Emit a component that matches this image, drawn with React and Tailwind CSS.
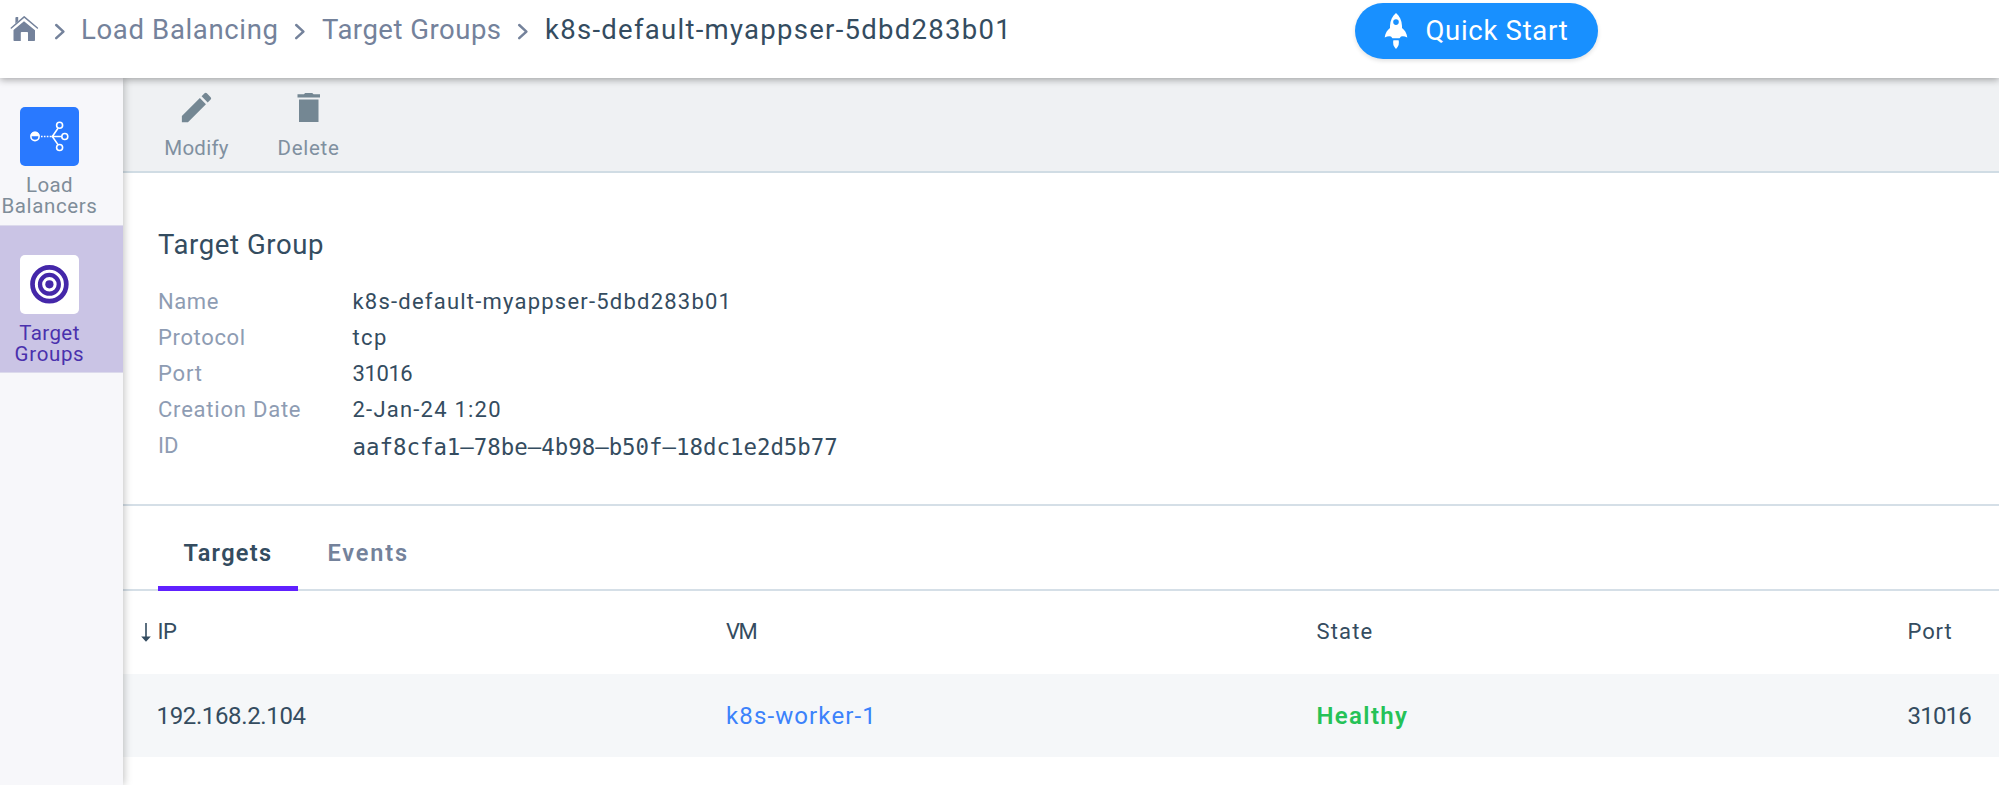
function HomeIcon() {
  return (
    <svg className="h-[28px] w-[29px] shrink-0" viewBox="0 0 29 28" fill="#74829b">
      <path d="M14 7.2 25 16.2V26.2Q25 27 24.2 27H18V18.8Q18 18 17.200 18H11.6Q10.8 18 10.8 18.8V27H4.3Q3.5 27 3.5 26.2V16Z" />
      <path d="M5.4 4Q5.4 3 6.4 3H8.2V7.2L5.4 9.600Z" />
      <path d="M1.3 14 14.2 2.9 27.4 14" fill="none" stroke="#74829b" strokeWidth="1.5" strokeLinecap="round" strokeLinejoin="round" />
    </svg>
  );
}

function Chevron() {
  return (
    <svg className="h-[18px] w-[12px] shrink-0" viewBox="0 0 12 18" fill="none" stroke="#74829b" strokeWidth="2.5" strokeLinecap="round" strokeLinejoin="round">
      <path d="M2.200 3 9.400 9.600 2.200 16.200" />
    </svg>
  );
}

function RocketIcon() {
  return (
    <svg className="h-[36px] w-[24px] shrink-0" viewBox="0 0 24 36" fill="white">
      <path
        fillRule="evenodd"
        d="M12 0C15.6 2.8 17.8 7.4 18 13L18 15C20.6 17.2 22.8 20 23.3 24.4Q19.5 22.8 17 23.6L15.6 25.2H8.4L7 23.6Q4.500 22.800 .7 24.400C1.200 20 3.400 17.200 6 15L6 13C6.200 7.400 8.400 2.800 12 0ZM12 6.300A2.800 2.800 0 1 0 12 11.900A2.800 2.800 0 1 0 12 6.300Z"
      />
      <path d="M9.400 27.200H14.600Q16 31.500 12 36Q8 31.500 9.400 27.200Z" />
    </svg>
  );
}

function PencilIcon() {
  return (
    <svg className="size-[39px]" viewBox="0 0 24 24" fill="#748793">
      <path d="M3 17.250V21h3.750L17.810 9.940l-3.750-3.750L3 17.250zM20.710 7.040a1 1 0 0 0 0-1.410l-2.340-2.340a1 1 0 0 0-1.410 0l-1.830 1.830 3.750 3.750 1.830-1.830z" />
    </svg>
  );
}

function TrashIcon() {
  return (
    <svg className="size-[39px]" viewBox="0 0 39 39" fill="#748793">
      <path d="M8.500 6.300H14.800L16.200 5H23.200L24.600 6.300H31V9.400H8.500ZM10 11.400H29.500V34H10Z" />
    </svg>
  );
}

function BalancerIcon() {
  return (
    <svg className="size-[59px] rounded-[5px] bg-[#2979ff]" viewBox="0 0 59 59" fill="none" stroke="white" strokeWidth="1.6">
      <circle cx="15" cy="29.500" r="4.100" />
      <path d="M10.500 29.300A4.500 4.500 0 0 1 19.500 29.300Z" fill="white" stroke="none" />
      <path d="M21 29.500H31" strokeDasharray="1.600 1.300" strokeWidth="1.400" />
      <path d="M38 21.200 32.300 29.500 38 37.600M32.300 29.500H41.500" />
      <circle cx="32.300" cy="29.500" r="1" fill="white" stroke="none" />
      <circle cx="39.600" cy="18.300" r="3" />
      <circle cx="44.800" cy="29.500" r="3" />
      <circle cx="39.600" cy="40.500" r="3" />
    </svg>
  );
}

function TargetIcon() {
  return (
    <svg className="size-[59px] rounded-[5px] bg-white" viewBox="0 0 59 59" fill="none" stroke="#4427a9" strokeWidth="4.700">
      <circle cx="29.400" cy="29.300" r="16.900" />
      <circle cx="29.400" cy="29.300" r="9.400" strokeWidth="4.300" />
      <circle cx="29.400" cy="29.300" r="4.100" fill="#4427a9" stroke="none" />
    </svg>
  );
}

function SortArrow() {
  return (
    <svg className="h-[20px] w-[10px] shrink-0" viewBox="0 0 10 20" fill="#344c60">
      <path d="M4.200 1H5.800V14.600H9.800L5 19.700 .2 14.600H4.200Z" />
    </svg>
  );
}

const labelCls = "text-[#8e9cb3]";

export default function App() {
  return (
    <div className="flex h-[785px] w-full flex-col overflow-hidden whitespace-nowrap bg-white font-[Roboto,sans-serif] text-[#344c60]">
      <header className="relative z-20 flex h-[78px] shrink-0 items-start bg-white shadow-[0_2px_7px_rgba(0,0,0,0.32)]">
        <nav className="flex h-[60px] items-center pl-[10px] text-[27.5px] leading-none text-[#74829b]">
          <div className="w-[44px] pb-[5px]"><HomeIcon /></div>
          <div className="w-[27px] pt-[1px]"><Chevron /></div>
          <span className="w-[213px] tracking-[0.66px]">Load Balancing</span>
          <div className="w-[28px] pt-[1px]"><Chevron /></div>
          <span className="w-[195px] tracking-[0.5px]">Target Groups</span>
          <div className="w-[28px] pt-[1px]"><Chevron /></div>
          <span className="tracking-[1.28px] text-[#344c60]">k8s-default-myappser-5dbd283b01</span>
        </nav>
        <button className="ml-auto mr-[401px] mt-[3px] flex h-[56px] w-[243px] items-center rounded-full bg-[#1890ff] pl-[28.500px] text-[27.5px] leading-none text-white shadow-[0_2px_4px_rgba(0,0,0,0.12)]">
          <RocketIcon />
          <span className="ml-[18px] tracking-[0.7px]">Quick Start</span>
        </button>
      </header>

      <div className="flex min-h-0 flex-1">
        <aside className="relative z-10 w-[123px] shrink-0 bg-[#f7f7fa] text-center text-[20.5px] leading-[21px] shadow-[1px_0_8px_rgba(0,0,0,0.25)]">
          <a className="block h-[147px] pt-[29px] text-[#7f8d99]">
            <div className="flex w-[99px] flex-col items-center gap-[8.500px]">
              <BalancerIcon />
              <div>
                <div className="tracking-[0.37px]">Load</div>
                <div className="tracking-[0.63px]">Balancers</div>
              </div>
            </div>
          </a>
          <a className="block h-[148px] border-y border-[#dcdaec] bg-[#cac4e5] pt-[29px] text-[#4a31ad]">
            <div className="flex w-[99px] flex-col items-center gap-[8.500px]">
              <TargetIcon />
              <div>
                <div className="tracking-[0.42px]">Target</div>
                <div className="tracking-[0.66px]">Groups</div>
              </div>
            </div>
          </a>
        </aside>

        <main className="min-w-0 flex-1">
          <div className="flex h-[95px] border-b-2 border-[#d0dce4] bg-[#eff1f3] pl-[17.500px] pt-[10px] text-[20.5px] leading-none text-[#8090a0]">
            <button className="flex w-[112px] flex-col items-center gap-[11px]">
              <PencilIcon />
              <span className="tracking-[0.25px]">Modify</span>
            </button>
            <button className="flex w-[112px] flex-col items-center gap-[11px]">
              <TrashIcon />
              <span className="tracking-[0.72px]">Delete</span>
            </button>
          </div>

          <section className="h-[333px] border-b-2 border-[#d5dfe7] pl-[35px] pt-[54px]">
            <h2 className="text-[27.5px] leading-[36px] tracking-[0.6px]">Target Group</h2>
            <dl className="mt-[20.500px] grid auto-rows-[36.150px] grid-cols-[194.500px_auto] items-start text-[22px] leading-[36px]">
              <dt className={labelCls + " tracking-[0.6px]"}>Name</dt>
              <dd className="tracking-[1.22px]">k8s-default-myappser-5dbd283b01</dd>
              <dt className={labelCls + " tracking-[0.65px]"}>Protocol</dt>
              <dd className="tracking-[1.39px]">tcp</dd>
              <dt className={labelCls + " tracking-[0.8px]"}>Port</dt>
              <dd className="tracking-[-0.4px]">31016</dd>
              <dt className={labelCls + " tracking-[0.78px]"}>Creation Date</dt>
              <dd className="tracking-[1.22px]">2-Jan-24 1:20</dd>
              <dt className={labelCls}>ID</dt>
              <dd className="font-['DejaVu_Sans_Mono',monospace] text-[22.400px] leading-[39px]">aaf8cfa1–78be–4b98–b50f–18dc1e2d5b77</dd>
            </dl>
          </section>

          <div className="flex h-[85px] items-stretch border-b-2 border-[#d5dfe7] pl-[34.500px] text-[23.500px] font-semibold leading-none">
            <div className="-mb-[2px] flex w-[140.500px] items-start border-b-[5px] border-[#6021ff] pl-[26px] pt-[36px] tracking-[1.32px]">Targets</div>
            <div className="pl-[29.500px] pt-[36px] tracking-[1.85px] text-[#74829b]">Events</div>
          </div>

          <div className="grid h-[83px] grid-cols-[585px_590.500px_591px_1fr] items-center pb-[2px] pl-[18px] text-[22px] leading-none">
            <div className="flex items-center gap-[6.500px]">
              <SortArrow />
              <span className="tracking-[-0.48px]">IP</span>
            </div>
            <span className="tracking-[-1.5px]">VM</span>
            <span className="tracking-[1.14px]">State</span>
            <span className="tracking-[0.91px]">Port</span>
          </div>
          <div className="grid h-[83px] grid-cols-[585px_590.500px_591px_1fr] items-center bg-[#f5f7f9] pl-[18px] text-[24px] leading-none">
            <span className="pl-[15.500px] tracking-[-0.36px]">192.168.2.104</span>
            <span className="tracking-[1.12px] text-[#3b82fb]">k8s-worker-1</span>
            <span className="font-semibold tracking-[1.34px] text-[#25c257]">Healthy</span>
            <span className="tracking-[-0.8px]">31016</span>
          </div>
        </main>
      </div>
    </div>
  );
}
